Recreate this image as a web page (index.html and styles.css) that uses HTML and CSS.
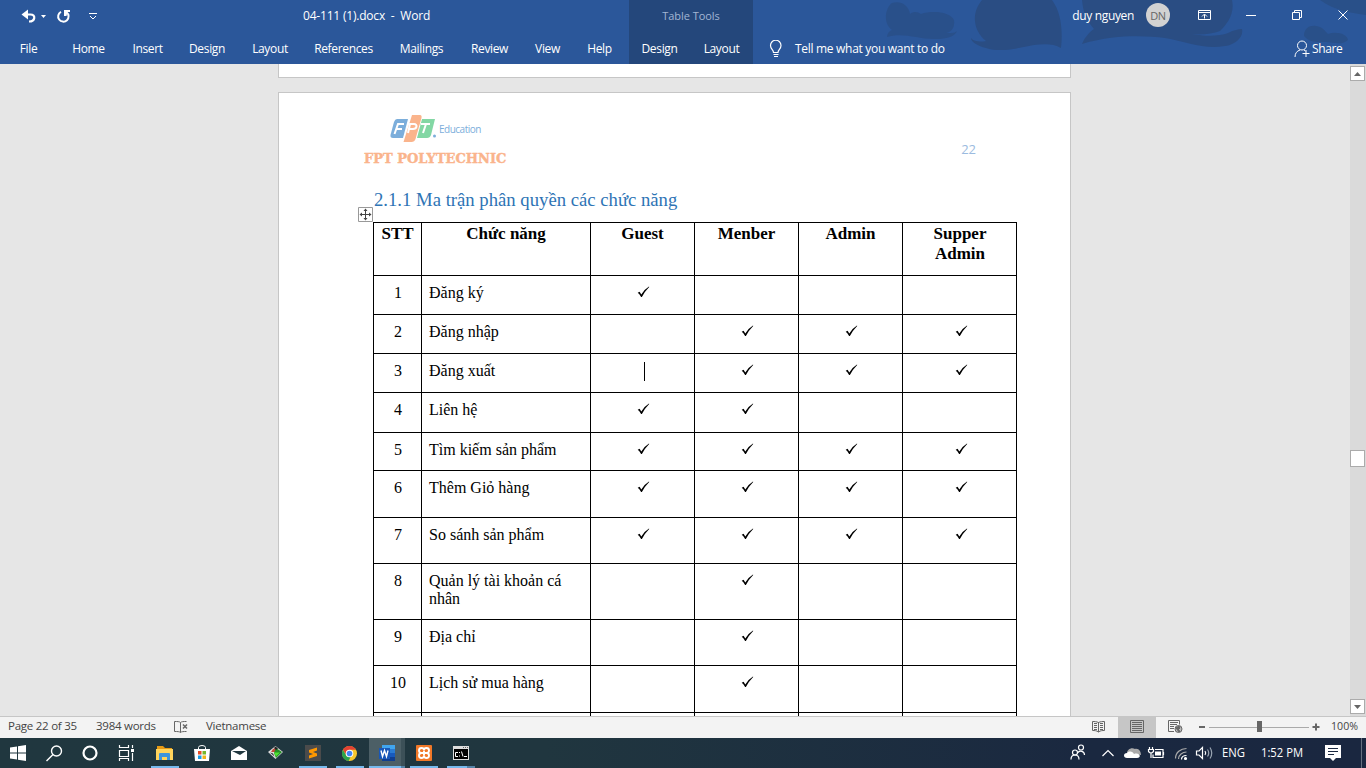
FILE: index.html
```html
<!DOCTYPE html>
<html lang="vi">
<head>
<meta charset="utf-8">
<title>04-111 (1).docx - Word</title>
<link rel="stylesheet" href="styles.css">
</head>
<body>
<header class="header">
  <svg class="art" width="506" height="64" viewBox="860 0 506 64">
    <path fill="#2a4d83" opacity=".7" d="M892 3c8-3 17 2 18 11 4-3 8-2 11 0 12-4 29-2 33 6 1 7-2 12-8 13h5c3 0 5-1 6-2-2 6-12 8-20 8-18 1-33-7-50-2 0-3 2-6 5-7C882 22 886 7 892 3z"/>
    <path fill="#2a4d83" d="M982 0h70c9 12 11 30 9 48-8-5-18-4-27-3-16 3-34 8-48 3-8-2-15-6-15-10 3 4 10 4 15 3-13-10-15-28-4-41zM1082 0h150c3 14-5 24-12 31-8 3-18 4-28 3 15 3 28 2 36-1 6-3 11-4 14-4 2 8-7 16-17 17-20 4-38-4-60-8-20-2-48-4-83 6 2-5 6-11 12-15-8-9-11-18-12-29z"/>
    <path fill="#2a4d83" opacity=".75" d="M1304 36c0-8 6-11 12-10 7 1 9 5 12 8 9-3 19 0 20 6-6 6-15 2-22 2-9 0-16 1-22-6zM1320 0h46v15c-14-2-31-4-46-15z"/>
  </svg>
  <div class="left">
    <div class="bar quick">
      <svg width="120" height="32" viewBox="0 0 120 32" fill="none" stroke="#fff">
        <path stroke-width="2.200" d="M25 14.500h5.500c5.500 0 5 7-1.500 7"/><path fill="#fff" stroke="none" d="M21.500 14.500l6.500-5v10z"/>
        <path fill="#fff" stroke="none" d="M41 15h5l-2.500 3z"/>
        <path stroke-width="2" d="M61 11.800a5.200 5.200 0 1 0 5.500.5"/><path fill="#fff" stroke="none" d="M64 10h6v2h-2.500l-1 4H64z"/>
        <path d="M89 13.500h8"/><path d="M90 16l3 3 3-3"/>
      </svg>
      <span class="doc-name">04-111 (1).docx&nbsp; -&nbsp; Word</span>
    </div>
    <nav class="bar">
      <span class="tab w58">File</span><span class="tab w62">Home</span><span class="tab w56">Insert</span><span class="tab w63">Design</span><span class="tab w63">Layout</span><span class="tab w84">References</span><span class="tab w72">Mailings</span><span class="tab w64">Review</span><span class="tab w52">View</span><span class="tab w52">Help</span>
    </nav>
  </div>
  <div class="context">
    <div class="bar tools">Table Tools</div>
    <nav class="bar"><span class="tab half">Design</span><span class="tab half">Layout</span></nav>
  </div>
  <div class="right">
    <div class="bar account">
      <span class="user">duy nguyen</span><span class="avatar">DN</span>
      <svg width="184" height="32" viewBox="1182 0 184 32" fill="none" stroke="#fff">
        <path d="M1198.500 10.500h12v9h-12zM1198.500 12.500h12M1204.500 18.500v-4M1202 16.500l2.500-2.500 2.500 2.500"/>
        <path d="M1246 15.500h10M1292.500 12.500h7v7h-7zM1294.500 12v-1.500h7v7h-1.500M1338.500 10.500l9 9M1347.500 10.500l-9 9"/>
      </svg>
    </div>
    <div class="bar">
      <svg class="bulb" width="14" height="18" viewBox="0 0 14 18" fill="none" stroke="#fff"><path stroke-width="1.200" d="M4.500 12.500c0-3-3-3.500-3-7a5 5 0 0 1 10.500 0c0 3.500-3 4-3 7zM4.500 14.500h5M5 16.500h4"/></svg>
      <span class="tell">Tell me what you want to do</span>
      <svg class="person" width="17" height="18" viewBox="0 0 17 18" fill="none" stroke="#fff"><circle cx="8" cy="5.500" r="4.500"/><path d="M1 17c0-4 2-6 5-7M10 10l1.500 1M8.500 13.500h7M12 10v7"/></svg>
      <span class="share">Share</span>
    </div>
  </div>
</header>

<main class="work">
  <div class="canvas">
    <section class="sheet previous"></section>
    <section class="sheet current">
      <div class="page-head">
        <div class="brand">
          <div class="brand-top">
            <svg width="48" height="30" viewBox="0 0 48 30">
              <path fill="#7caedb" d="M7 5h11l-5 19H3q-3 0-2.500-3L4 8q1-3 3-3z"/>
              <path fill="#83d7a4" d="M32 5h13l-4 16q-1 3-4 3H27z"/>
              <path fill="#fab48c" d="M22 1h8q2 0 1.500 3l-6 21q-1 3-4 3h-8z"/>
              <path fill="none" stroke="#fff" stroke-width="2" d="M14 10H8L4.500 20M7 15h5M18 19l2-9h4c4 0 3 5-1 5h-4M31 10h9M36 10l-3 9"/>
              <circle cx="44.500" cy="22" r="1.500" fill="#7caedb"/>
            </svg>
            <span class="edu">Education</span>
          </div>
          <div class="poly">FPT POLYTECHNIC</div>
        </div>
        <span class="page-no">22</span>
      </div>
      <h1 class="title">2.1.1 Ma trận phân quyền các chức năng</h1>
      <div class="table-wrap">
        <svg class="handle" width="15" height="15" viewBox="0 0 15 15"><path fill="#fff" stroke="#999" d="M.5.500h14v14H.5z"/><path fill="none" stroke="#444" d="M7.500 3v9M3 7.500h9"/><path fill="#444" d="M7.500 1.500l2 2.500h-4zM7.500 13.500l2-2.500h-4zM1.500 7.500l2.500-2v4zM13.500 7.500l-2.500-2v4z"/></svg>
        <div class="table" id="matrix"></div>
      </div>
    </section>
  </div>
  <div class="scroll">
    <span class="sbtn"><svg width="7" height="4" viewBox="0 0 7 4"><path fill="#666" d="M0 4l3.500-4L7 4z"/></svg></span>
    <span class="thumb"></span>
    <span class="sbtn down"><svg width="7" height="4" viewBox="0 0 7 4"><path fill="#666" d="M0 0l3.500 4L7 0z"/></svg></span>
  </div>
</main>

<footer class="status">
  <span class="st pages">Page 22 of 35</span><span class="st words">3984 words</span>
  <svg class="proof" width="15" height="14" viewBox="0 0 15 14" fill="none" stroke="#666"><path d="M6.500 12.500c-1-1-3-1-6-1v-10c3 0 5 0 6 1zM6.500 2.500c1-1 3-1 6-1M12.500 11.500c-3 0-5 0-6 1"/><path stroke-width="1.500" d="M9 4.500l4 4M13 4.500l-4 4"/></svg>
  <span class="st lang">Vietnamese</span>
  <svg class="views" width="278" height="21" viewBox="1088 717 278 21" fill="none" stroke="#666">
    <path fill="#c6c6c6" stroke="none" d="M1118 717h38v21h-38z"/>
    <path d="M1098.500 722.500c-2-1-4-1-6-1v9c2 0 4 0 6 1.500 2-1.500 4-1.500 6-1.500v-9c-2 0-4 0-6 1zM1098.500 722v10M1094 723.500h3M1094 725.500h3M1094 727.500h3M1094 729.500h3M1100 723.500h3M1100 725.500h3M1100 727.500h3M1100 729.500h3"/>
    <path d="M1130.500 720.500h13v12h-13zM1132 722.500h10M1132 724.500h10M1132 726.500h10M1132 728.500h10M1132 730.500h10"/>
    <path d="M1174 731.500h-5.500v-11h11v4M1170 722.500h8M1170 724.500h7M1170 726.500h4M1170 728.500h4"/><circle cx="1178.500" cy="729" r="3.500" fill="#bbb"/><path fill="#666" d="M1176 728l3-2 1 2-2 2 2 1-1 1z"/>
    <path stroke-width="2" d="M1199 727h6M1312.500 727h7M1316 723.500v7"/><path stroke="#aaa" d="M1209 727.500h100"/><path fill="#666" stroke="none" d="M1257 721h5v11h-5z"/>
    <text class="percent" x="1331" y="730" textLength="27" lengthAdjust="spacingAndGlyphs">100%</text>
  </svg>
</footer>

<footer class="taskbar">
  <div class="sys"><svg width="16" height="16" viewBox="0 0 16 16"><path fill="#fff" d="M0 2.500l7-1V7.500H0zM8 1.300l8-1.200v7.400H8zM0 8.500h7v6l-7-1zM8 8.500h8v7.400l-8-1.200z"/></svg></div>
  <div class="sys"><svg width="17" height="17" viewBox="0 0 17 17" fill="none" stroke="#fff" stroke-width="1.400"><circle cx="10.500" cy="6" r="5"/><path d="M7 9.500L.5 16"/></svg></div>
  <div class="sys"><svg width="16" height="16" viewBox="0 0 16 16" fill="none" stroke="#fff" stroke-width="2.200"><circle cx="8" cy="8" r="6.500"/></svg></div>
  <div class="sys"><svg width="17" height="16" viewBox="0 0 17 16" fill="none" stroke="#fff" stroke-width="1.200"><path d="M1.500 0v2.500h9V0M1.500 5.500h9v6h-9zM1.500 16v-2.500h9V16M14.500 0v3M14.500 8v8"/><path fill="#fff" stroke="none" d="M13 4h3v3h-3z"/></svg></div>
  <div class="app first run"><svg width="17" height="16" viewBox="0 0 17 16"><path fill="#e69a15" d="M1 1h6l2 2h7v4H1z"/><path fill="#ffd45c" d="M0 4h17v11H0z"/><path fill="#3d94dc" d="M3 15V9q0-1 1-1h9q1 0 1 1v6h-3v-3H6v3z"/></svg></div>
  <div class="app"><svg width="16" height="16" viewBox="0 0 16 16"><path fill="none" stroke="#fff" d="M4.500 5V2.500q0-2 3.500-2t3.500 2V5"/><path fill="#fff" d="M0 4h16l-1 12H1z"/><path fill="#e64c25" d="M4 6h3.500v3.500H4z"/><path fill="#77b72a" d="M8.500 6H12v3.500H8.500z"/><path fill="#169be5" d="M4 10.500h3.500V14H4z"/><path fill="#f2b417" d="M8.500 10.500H12V14H8.500z"/></svg></div>
  <div class="app"><svg width="16" height="14" viewBox="0 0 16 14"><path fill="#fff" d="M0 5l8-5 8 5v9H0z"/><path fill="#20373f" d="M1 5h14l-6 4-2-1z"/></svg></div>
  <div class="app"><svg width="16" height="14" viewBox="0 0 16 14"><path fill="#ddd" d="M7.500 0L15 6l-7.500 7L0 6z"/><path fill="#c44a3a" d="M5 3l3-1v4H3z"/><path fill="#268d27" d="M8 2l6 4-6 6-2-5z"/><path fill="#51e532" d="M6 6.500h6l-4 4z"/><path fill="#222" d="M7.500.5L10 2.500 8 4 6 2zM2 6.500l3 1 1.500 3z"/></svg></div>
  <div class="app run"><svg width="16" height="16" viewBox="0 0 16 16"><path fill="#4b4b4b" d="M0 0h16v16H0z"/><path fill="#ff9800" d="M4 5l8-2.500v3L8 7l4 1.500V11l-8 2.500v-3L8 9 4 7.500z"/></svg></div>
  <div class="app run"><svg width="15" height="15" viewBox="0 0 16 16"><circle cx="8" cy="8" r="8" fill="#f7c72d"/><path fill="#e34133" d="M1 4a8 8 0 0 1 14 0H8L5 10z"/><path fill="#2ca24c" d="M1 4l4 7 4 1-2 4A8 8 0 0 1 1 4z"/><circle cx="8" cy="8" r="4" fill="#fff"/><circle cx="8" cy="8" r="3" fill="#4285f4"/></svg></div>
  <div class="app run active"><svg width="16" height="16" viewBox="0 0 16 16"><path fill="#41a5ee" d="M3 0h13v4H3z"/><path fill="#2b7cd3" d="M3 4h13v4H3z"/><path fill="#185abd" d="M3 8h13v4H3z"/><path fill="#103f91" d="M3 12h13v4H3z"/><path fill="#1857b8" d="M0 3h11v11H0z"/><path fill="none" stroke="#fff" stroke-width="1.400" d="M2 5.500l1.500 6 2-6 2 6 1.500-6"/></svg></div>
  <div class="app run"><svg width="16" height="16" viewBox="0 0 16 16"><rect width="16" height="16" rx="1" fill="#f17828"/><path fill="none" stroke="#fff" stroke-width="1.900" d="M8 5.500v5M8 5Q8 3 5.500 3T3 5.500 5.500 8Q3 8 3 10.500T5.500 13 8 10.800Q8 13 10.500 13t2.500-2.500T10.500 8Q13 8 13 5.500T10.500 3 8 5M5.500 8h5"/></svg></div>
  <div class="app run cmd"><svg width="16" height="14" viewBox="0 0 16 14"><path fill="#ddd" d="M0 0h16v14H0z"/><path fill="#000" d="M1 3h14v10H1z"/><path fill="none" stroke="#fff" d="M5 6.500H2.500v4H5M6.500 6v1M6.500 9.500v1M8.500 5.500l1.500 5M11 10.500h3"/><path fill="#666" d="M10 1h1v1h-1zM12 1h1v1h-1zM14 1h1v1h-1z"/></svg></div>
  <svg class="tray" width="306" height="30" viewBox="1060 738 306 30" fill="none" stroke="#fff" stroke-width="1.200">
    <circle cx="1075" cy="752.500" r="2.500"/><path d="M1071 759.500c0-6 8-6 8 0"/><circle cx="1081" cy="747.500" r="2.500"/><path d="M1077.500 753c2-3 7-2 7 2"/>
    <path d="M1102.500 756l5.500-5.500 5.500 5.500"/>
    <path fill="#aaa" stroke="none" d="M1127 753c0-3 4-6 8-4 4-1 6 3 6 6z"/><path fill="#fff" stroke="none" d="M1127 758c-4 0-4-5 0-5 3-3 6-1 7 1 6-2 8 4 3 4z"/>
    <path d="M1155 749.500h8v8h-10v-3M1163.500 752v3M1149.500 747v2M1152.500 747v2M1148.500 749.500h5v2q-2.500 3-5 0zM1151 753v5"/><path fill="#fff" stroke="none" d="M1155 751.500h6v4h-6z"/>
    <g stroke="#aaa"><path d="M1175.500 758.500c0-6 5-10 11-10M1178.500 759c0-4 4-7 8-7"/></g><path d="M1181.500 759.500c0-3 2-4 5-4"/><circle cx="1185.500" cy="758.500" r="1" fill="#fff"/>
    <path d="M1196.500 751h2.500l3.500-3.500v11L1199 755h-2.500zM1205 751q1.500 2 0 4"/><path stroke="#9aa5b2" d="M1207.500 749.500q2.500 3.500 0 7M1210 747.500q3.500 5.500 0 11"/>
    <text class="clock" x="1222" y="757" textLength="23" lengthAdjust="spacingAndGlyphs">ENG</text>
    <text class="clock" x="1261" y="757" textLength="42" lengthAdjust="spacingAndGlyphs">1:52 PM</text>
    <path fill="#fff" stroke="none" d="M1325 745h16v13h-5l-3 3-3-3h-5z"/><path stroke="#1a2840" d="M1328 748.500h10M1328 751.500h10M1328 754.500h6"/>
    <path stroke="#657080" stroke-width="1" d="M1361.500 738v30"/>
  </svg>
</footer>
<script src="table.js"></script>
</body>
</html>
```
FILE: styles.css
```css
* { box-sizing: border-box; }
body { margin: 0; width: 1366px; height: 768px; overflow: hidden; display: flex; flex-direction: column; font: 12px "Open Sans", sans-serif; }
svg { display: block; flex: none; }
.header { position: relative; flex: none; display: flex; height: 64px; background: #2b579a; color: #fff; }
.art { position: absolute; right: 0; top: 0; }
.left { width: 629px; }
.context { width: 124px; background: #24477b; }
.right { width: 613px; position: relative; }
.bar { display: flex; height: 32px; align-items: center; white-space: nowrap; letter-spacing: -.35px; }
.left nav, .context nav, .right .bar:last-child { height: 33px; }
.doc-name { margin-left: 183px; letter-spacing: -.2px; height: 18px; }
.tab { display: flex; justify-content: center; flex: none; padding-right: 1px; }
.w58 { width: 58px; } .w62 { width: 62px; } .w56 { width: 56px; } .w63 { width: 63px; } .w84 { width: 84px; }
.w72 { width: 72px; } .w64 { width: 64px; } .w52 { width: 52px; } .half { width: 62px; }
.tools { justify-content: center; color: #a3b6d3; letter-spacing: -.05px; font-size: 11px; height: 31px; margin-bottom: 1px; }
.account { justify-content: flex-end; }
.user { height: 18px; }
.avatar { width: 24px; height: 24px; margin: -2px 12px 0; border-radius: 50%; background: #d2d2d2; color: #666; font-size: 11px; display: flex; align-items: center; justify-content: center; }
.bulb { margin-left: 16px; }
.tell { width: 150px; margin-left: 12px; letter-spacing: -.3px; }
.person { margin-left: 349px; }
.share { margin-left: 1px; }

.work { display: flex; flex: none; height: 652px; background: #e6e6e6; }
.canvas { width: 1350px; padding-left: 278px; overflow: hidden; }
.sheet { width: 793px; background: #fff; border: 1px solid #c6c6c6; }
.previous { height: 14px; border-top: 0; margin-bottom: 14px; }
.current { height: 700px; padding: 21px 53px 0 82px; }
.page-head { display: flex; justify-content: space-between; height: 70px; }
.brand { padding-left: 3px; }
.brand-top { display: flex; padding-left: 26px; height: 35px; }
.edu { color: #7caedb; font-size: 10px; line-height: 31px; letter-spacing: -.5px; margin-left: 1px; }
.poly { color: #fab48c; font: bold 13px/20px "DejaVu Serif", serif; white-space: nowrap; letter-spacing: 0; -webkit-text-stroke: .4px #fab48c; }
.page-no { margin: 26px 41px 0 0; color: #9bbbe0; font: 13px/19px "Open Sans", sans-serif; }
.title { margin: 5px 0 0 13px; height: 33px; color: #2e74b5; font: 18.700px/22px "Liberation Serif", serif; white-space: nowrap; }
.table-wrap { position: relative; margin-left: 12px; width: 644px; }
.handle { position: absolute; left: -15px; top: -15px; }
.table { display: grid; grid-template-columns: 48px 169px 104px 104px 104px 115px; grid-template-rows: 53px 39px 39px 39px 40px 38px 47px 46px 56px 46px 47px 40px; border-right: 1px solid #000; font: 16px/18px "Liberation Serif", serif; color: #000; }
.cell { border: solid #000; border-width: 1px 0 0 1px; padding: 8px 7px 0; text-align: center; }
.cell.name { text-align: left; }
.cell.th { font-weight: bold; font-size: 17px; line-height: 20px; padding: 1px 7px 0; }
.cell svg { margin: 2px auto 0; transform: translateX(1px); }
.cell.s { padding-left: 8px; }
.caret { display: block; width: 1px; height: 19px; margin: 0 auto; transform: translateX(2px); background: #000; }

.scroll { width: 16px; padding: 2px 1px 2px 0; background: #dadada; display: flex; flex-direction: column; }
.sbtn, .thumb { width: 15px; height: 15px; border: 1px solid #ababab; background: #fff; display: flex; align-items: center; justify-content: center; }
.thumb { height: 17px; margin-top: 369px; }
.down { margin-top: auto; }

.status { flex: none; height: 22px; background: #f3f3f3; border-top: 1px solid #c6c6c6; display: flex; color: #444; font-size: 11.500px; line-height: 18px; white-space: nowrap; letter-spacing: -.25px; }
.pages { width: 88px; margin-left: 8px; } .words { width: 78px; }
.proof { margin: 3px 0 0; } .lang { margin-left: 17px; }
.views { margin-left: auto; }
.percent { font-size: 11.500px; fill: #444; stroke: none; letter-spacing: 0; }

.taskbar { flex: none; display: flex; height: 30px; background: linear-gradient(90deg, #20373f, #20363f 40%, #1a2840 80%, #1a2740); }
.sys { width: 36px; display: flex; align-items: center; justify-content: center; }
.app { width: 37px; display: flex; align-items: center; justify-content: center; background: no-repeat center bottom / 28px 2px; }
.first { margin-left: 2px; }
.run { background-image: linear-gradient(#76b9ed, #76b9ed); }
.active { background: linear-gradient(90deg, #76b9ed 32px, #5583a7 32px) no-repeat 1px bottom / 36px 2px, linear-gradient(90deg, transparent 1px, #4c5f66 1px 33px, #3c5058 33px); }
.cmd { background-image: linear-gradient(90deg, #76b9ed 70%, #5583a7 70%); }
.tray { margin-left: auto; }
.clock { font-size: 12px; fill: #fff; stroke: none; }
```
FILE: table.js
```javascript
const rows = [
  ["1", "Đăng ký", "1000"],
  ["2", "Đăng nhập", "0111"],
  ["3", "Đăng xuất", "c111"],
  ["4", "Liên hệ", "1100"],
  ["5", "Tìm kiếm sản phẩm", "1111"],
  ["6", "Thêm Giỏ hàng", "1111"],
  ["7", "So sánh sản phẩm", "1111"],
  ["8", "Quản lý tài khoản cá nhân", "0100"],
  ["9", "Địa chỉ", "0100"],
  ["10", "Lịch sử mua hàng", "0100"],
  ["", "", "0000"]
];
const tick = '<svg width="13" height="12" viewBox="0 0 13 12"><path d="M.7 6.800L2.600 5.800 4.300 8.600Q7.500 3.300 12 .6L12.200.9Q8 5 4.900 11H4.100Q2.300 7.500.7 6.800z"/></svg>';
const marks = { "0": "", "1": tick, c: '<span class="caret"></span>' };
const heads = ["STT", "Chức năng", "Guest", "Menber", "Admin", "Supper Admin"];
let html = heads.map(h => `<div class="cell th">${h}</div>`).join("");
for (const [n, name, flags] of rows) {
  html += `<div class="cell s">${n}</div><div class="cell name">${name}</div>`;
  html += [...flags].map(f => `<div class="cell">${marks[f]}</div>`).join("");
}
document.getElementById("matrix").innerHTML = html;
```
